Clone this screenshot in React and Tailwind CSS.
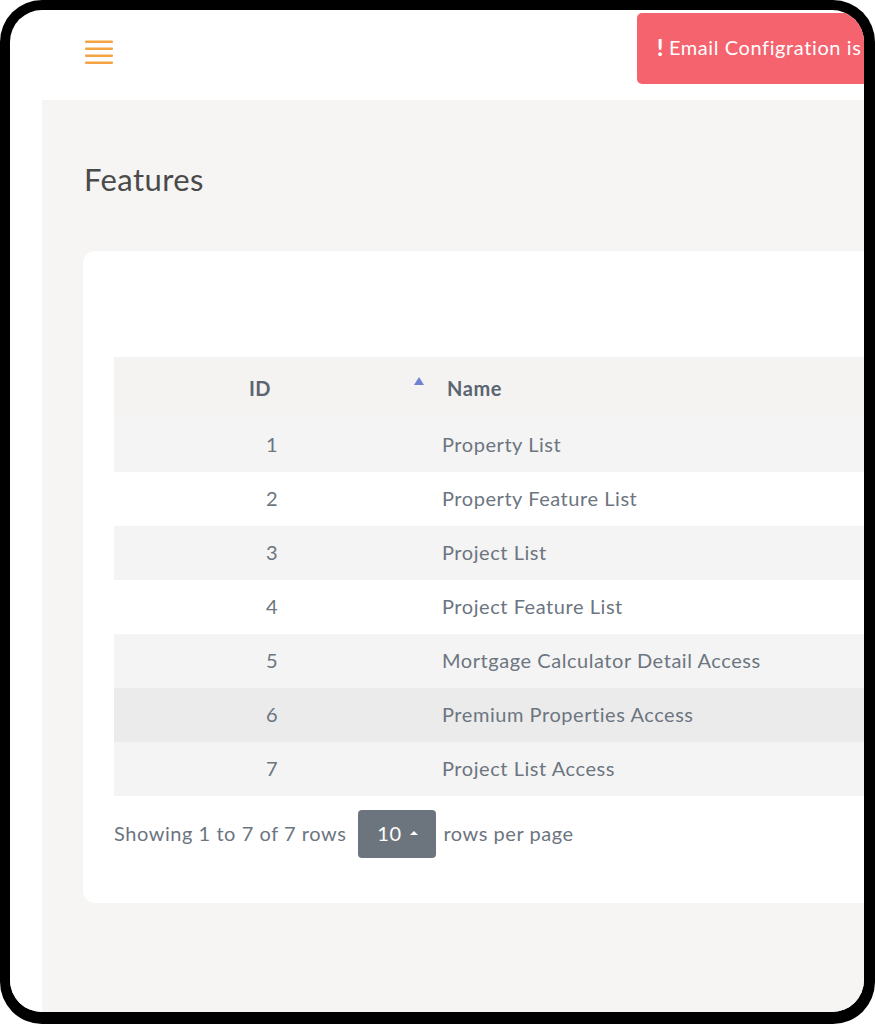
import React from 'react';

const features = [
  { id: 1, name: 'Property List' },
  { id: 2, name: 'Property Feature List' },
  { id: 3, name: 'Project List' },
  { id: 4, name: 'Project Feature List' },
  { id: 5, name: 'Mortgage Calculator Detail Access' },
  { id: 6, name: 'Premium Properties Access' },
  { id: 7, name: 'Project List Access' },
];

function Hamburger() {
  return (
    <svg width="28" height="24" viewBox="0 0 28 24" fill="none">
      {[3, 10, 17, 24].map((y) => (
        <rect key={y} x="0" y={y - 2.5} width="28" height="2.4" rx="1" fill="#f5a342" />
      ))}
    </svg>
  );
}

export default function App() {
  return (
    <div className="w-[875px] h-[1024px] bg-white" style={{ fontFamily: 'Lato, "Open Sans", sans-serif' }}>
      <div className="w-full h-full bg-black rounded-[42px] pl-[10px] pt-[10px] pr-[11px] pb-[12px]">
        <div className="w-full h-full bg-white rounded-[32px] overflow-hidden flex flex-col">
          {/* top bar */}
          <div className="h-[90px] shrink-0 flex items-start justify-between">
            <button className="mt-[30px] ml-[75px]">
              <Hamburger />
            </button>
            <div className="mt-[3px] h-[71px] w-[240px] -mr-[13px] bg-[#f5636f] rounded-l-[5px] flex items-center pl-[20px] pb-[3px] text-white text-[20px] tracking-[0.6px] whitespace-nowrap overflow-hidden">
              <span className="font-black text-[22px] mr-[5px]">!</span>
              Email Configration is
            </div>
          </div>

          <div className="flex-1 flex">
            <div className="w-[32px] shrink-0 bg-white" />
            <div className="flex-1 bg-[#f6f5f4] pl-[41px] overflow-hidden">
              <h1 className="text-[31px] tracking-[0.4px] text-[#4a4a4a] mt-[60px] leading-[38px] ml-[1px]">Features</h1>

              <div className="mt-[53px] w-[900px] bg-white rounded-[12px] pl-[31px] pt-[106px] pb-[45px]">
                <table className="w-[869px] border-collapse text-[20px] tracking-[0.55px]">
                  <thead>
                    <tr className="h-[61px] bg-[#f4f3f1] text-[#5b6571] font-bold">
                      <th className="w-[316px] relative text-center pr-[24px] font-bold">
                        ID
                        <span className="absolute right-[6px] top-[20px] w-0 h-0 border-l-[5px] border-r-[5px] border-b-[8px] border-l-transparent border-r-transparent border-b-[#6e82d2]" />
                      </th>
                      <th className="text-left pl-[17px] font-bold">Name</th>
                    </tr>
                  </thead>
                  <tbody className="text-[#6c7580]">
                    {features.map((f) => (
                      <tr
                        key={f.id}
                        className={
                          'h-[54px] ' +
                          (f.id === 6 ? 'bg-[#ebebeb]' : f.id % 2 === 1 ? 'bg-[#f4f4f4]' : 'bg-white')
                        }
                      >
                        <td className="text-center pb-[2px]">{f.id}</td>
                        <td className="pl-[12px] pb-[2px]">{f.name}</td>
                      </tr>
                    ))}
                  </tbody>
                </table>

                <div className="mt-[14px] flex items-center text-[20px] tracking-[0.55px] text-[#6c7580]">
                  <span className="pb-[3px]">Showing 1 to 7 of 7 rows</span>
                  <button className="ml-[12px] mr-[7px] h-[48px] w-[78px] bg-[#6c757d] rounded-[4px] text-white flex items-center justify-center gap-[8px] pb-[2px]">
                    10
                    <span className="w-0 h-0 border-l-[4px] border-r-[4px] border-b-[4px] border-l-transparent border-r-transparent border-b-white" />
                  </button>
                  <span className="pb-[3px]">rows per page</span>
                </div>
              </div>
            </div>
          </div>
        </div>
      </div>
    </div>
  );
}
